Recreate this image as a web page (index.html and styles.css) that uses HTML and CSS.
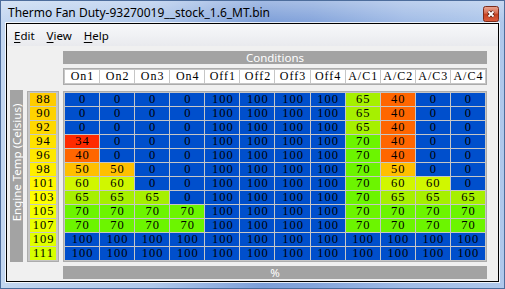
FILE: index.html
```html
<!doctype html>
<html lang="en">

<head>
	<meta charset="UTF-8">
	<title>Thermo Fan Duty</title>
	<link rel="stylesheet" href="styles.css">
</head>

<body>
	<div class="window">
		<div class="titlebar">
			<span class="title">Thermo Fan Duty-93270019__stock_1.6_MT.bin</span>
			<span class="close-btn">
				<svg width="16" height="16" viewBox="0 0 16 16">
					<defs>
						<linearGradient id="closeGrad" x1="0" y1="0" x2="0" y2="1">
							<stop offset="0" stop-color="#eaa793" />
							<stop offset="0.45" stop-color="#d66a4f" />
							<stop offset="0.5" stop-color="#c4401f" />
							<stop offset="1" stop-color="#dc5c3c" />
						</linearGradient>
					</defs>
					<rect x="0.5" y="0.5" width="15" height="15" rx="2" fill="url(#closeGrad)" stroke="#7a2b1b" />
					<path d="M5.5 5.5 L10.5 10.5 M10.5 5.5 L5.5 10.5" stroke="#5a1e12" stroke-width="3.6" />
					<path d="M5.5 5.5 L10.5 10.5 M10.5 5.5 L5.5 10.5" stroke="#ffffff" stroke-width="1.8" />
				</svg>
			</span>
		</div>

		<div class="frame">
			<div class="client">
				<div class="menubar">
					<span class="menu-item"><u>E</u>dit</span>
					<span class="menu-item"><u>V</u>iew</span>
					<span class="menu-item"><u>H</u>elp</span>
				</div>

				<div class="table-area">
					<div class="bar conditions">Conditions</div>

					<div class="col-heads">
						<div>On1</div><div>On2</div><div>On3</div><div>On4</div>
						<div>Off1</div><div>Off2</div><div>Off3</div><div>Off4</div>
						<div>A/C1</div><div>A/C2</div><div>A/C3</div><div>A/C4</div>
					</div>

					<div class="axis-label"><span>Engine Temp (Celsius)</span></div>

					<div class="row-heads">
						<div class="t88">88</div>
						<div class="t90">90</div>
						<div class="t92">92</div>
						<div class="t94">94</div>
						<div class="t96">96</div>
						<div class="t98">98</div>
						<div class="t101">101</div>
						<div class="t103">103</div>
						<div class="t105">105</div>
						<div class="t107">107</div>
						<div class="t109">109</div>
						<div class="t111">111</div>
					</div>

					<div class="cells">
						<!-- 88 -->
						<div class="d0">0</div><div class="d0">0</div><div class="d0">0</div><div class="d0">0</div>
						<div class="d100">100</div><div class="d100">100</div><div class="d100">100</div><div class="d100">100</div>
						<div class="d65">65</div><div class="d40">40</div><div class="d0">0</div><div class="d0">0</div>
						<!-- 90 -->
						<div class="d0">0</div><div class="d0">0</div><div class="d0">0</div><div class="d0">0</div>
						<div class="d100">100</div><div class="d100">100</div><div class="d100">100</div><div class="d100">100</div>
						<div class="d65">65</div><div class="d40">40</div><div class="d0">0</div><div class="d0">0</div>
						<!-- 92 -->
						<div class="d0">0</div><div class="d0">0</div><div class="d0">0</div><div class="d0">0</div>
						<div class="d100">100</div><div class="d100">100</div><div class="d100">100</div><div class="d100">100</div>
						<div class="d65">65</div><div class="d40">40</div><div class="d0">0</div><div class="d0">0</div>
						<!-- 94 -->
						<div class="d34">34</div><div class="d0">0</div><div class="d0">0</div><div class="d0">0</div>
						<div class="d100">100</div><div class="d100">100</div><div class="d100">100</div><div class="d100">100</div>
						<div class="d70">70</div><div class="d40">40</div><div class="d0">0</div><div class="d0">0</div>
						<!-- 96 -->
						<div class="d40">40</div><div class="d0">0</div><div class="d0">0</div><div class="d0">0</div>
						<div class="d100">100</div><div class="d100">100</div><div class="d100">100</div><div class="d100">100</div>
						<div class="d70">70</div><div class="d40">40</div><div class="d0">0</div><div class="d0">0</div>
						<!-- 98 -->
						<div class="d50">50</div><div class="d50">50</div><div class="d0">0</div><div class="d0">0</div>
						<div class="d100">100</div><div class="d100">100</div><div class="d100">100</div><div class="d100">100</div>
						<div class="d70">70</div><div class="d50">50</div><div class="d0">0</div><div class="d0">0</div>
						<!-- 101 -->
						<div class="d60">60</div><div class="d60">60</div><div class="d0">0</div><div class="d0">0</div>
						<div class="d100">100</div><div class="d100">100</div><div class="d100">100</div><div class="d100">100</div>
						<div class="d70">70</div><div class="d60">60</div><div class="d60">60</div><div class="d0">0</div>
						<!-- 103 -->
						<div class="d65">65</div><div class="d65">65</div><div class="d65">65</div><div class="d0">0</div>
						<div class="d100">100</div><div class="d100">100</div><div class="d100">100</div><div class="d100">100</div>
						<div class="d70">70</div><div class="d65">65</div><div class="d65">65</div><div class="d65">65</div>
						<!-- 105 -->
						<div class="d70">70</div><div class="d70">70</div><div class="d70">70</div><div class="d70">70</div>
						<div class="d100">100</div><div class="d100">100</div><div class="d100">100</div><div class="d100">100</div>
						<div class="d70">70</div><div class="d70">70</div><div class="d70">70</div><div class="d70">70</div>
						<!-- 107 -->
						<div class="d70">70</div><div class="d70">70</div><div class="d70">70</div><div class="d70">70</div>
						<div class="d100">100</div><div class="d100">100</div><div class="d100">100</div><div class="d100">100</div>
						<div class="d70">70</div><div class="d70">70</div><div class="d70">70</div><div class="d70">70</div>
						<!-- 109 -->
						<div class="d100">100</div><div class="d100">100</div><div class="d100">100</div><div class="d100">100</div>
						<div class="d100">100</div><div class="d100">100</div><div class="d100">100</div><div class="d100">100</div>
						<div class="d100">100</div><div class="d100">100</div><div class="d100">100</div><div class="d100">100</div>
						<!-- 111 -->
						<div class="d100">100</div><div class="d100">100</div><div class="d100">100</div><div class="d100">100</div>
						<div class="d100">100</div><div class="d100">100</div><div class="d100">100</div><div class="d100">100</div>
						<div class="d100">100</div><div class="d100">100</div><div class="d100">100</div><div class="d100">100</div>
					</div>

					<div class="bar units">%</div>
				</div>
			</div>
		</div>
	</div>
</body>

</html>
```

FILE: styles.css
```css
:root {
	--ui-font: "Segoe UI", "Noto Sans", "Liberation Sans", sans-serif;
	--cell-font: "Liberation Serif", "DejaVu Serif", serif;
	--bar-gray: #a3a3a3;
	--grid-line: #c6c6c6;
	--grid-edge: #acacac;
	--client-bg: #f0f0f0;
	--off-blue: #004fcc;
}

* {
	box-sizing: border-box;
	margin: 0;
	padding: 0;
}

body {
	width: 505px;
	height: 289px;
	overflow: hidden;
	background: #ffffff;
}

/* window chrome */
.window {
	width: 505px;
	height: 289px;
	display: flex;
	flex-direction: column;
	border: 1px solid #4d6d9c;
	background:
		linear-gradient(to bottom, rgba(255, 255, 255, 0.3), rgba(255, 255, 255, 0) 22px),
		linear-gradient(to right, #c2d6f0 0%, #b0c8eb 30%, #7c9ed8 52%, #84a4db 62%, #a0bbe6 80%, #afc8eb 100%);
}

.titlebar {
	height: 21px;
	display: flex;
	align-items: center;
	padding-left: 7px;
	flex-shrink: 0;
}

.title {
	flex: 1;
	font-family: var(--ui-font);
	font-size: 12px;
	color: #000000;
	white-space: nowrap;
	padding-top: 1px;
}

.close-btn {
	align-self: flex-end;
	width: 16px;
	height: 16px;
	margin: 0 5px 0 0;
	display: block;
}

.close-btn svg {
	display: block;
}

.frame {
	flex: 1;
	display: flex;
	margin: 0 4px 5px 4px;
	border: 1px solid rgba(255, 255, 255, 0.8);
}

.client {
	flex: 1;
	border: 1px solid #000000;
	background: var(--client-bg);
	display: flex;
	flex-direction: column;
}

/* menu */
.menubar {
	height: 22px;
	display: flex;
	padding: 3px 0 0 1px;
	background: linear-gradient(to bottom, #f7f8fa, #e9eaee);
	font-family: var(--ui-font);
	font-size: 11.5px;
	line-height: 17px;
	color: #000000;
}

.menu-item {
	padding: 0 6px;
}

.menu-item u {
	text-decoration-thickness: 1px;
	text-underline-offset: 2px;
}

/* table layout */
.table-area {
	display: grid;
	grid-template-columns: 13px 32px 424px;
	grid-template-rows: 13px 17px 173px 13px;
	column-gap: 4px;
	row-gap: 4px;
	padding: 5px 0 0 3px;
}

.bar {
	grid-column: 3;
	background: var(--bar-gray);
	color: #ffffff;
	font-family: var(--ui-font);
	font-size: 11.5px;
	line-height: 13px;
	text-align: center;
	overflow: hidden;
}

.conditions {
	grid-row: 1;
}

.units {
	grid-row: 4;
}

.col-heads {
	grid-column: 3;
	grid-row: 2;
	display: grid;
	grid-template-columns: repeat(12, 1fr);
	grid-auto-rows: 13px;
	gap: 1px;
	padding: 1px;
	border: 1px solid var(--grid-edge);
	background: var(--grid-line);
}

.col-heads div {
	background: #ffffff;
	font-family: var(--cell-font);
	font-size: 12px;
	line-height: 13px;
	letter-spacing: 1px;
	padding-left: 1px;
	text-align: center;
	color: #000000;
}

/* vertical axis caption, turned to read bottom-to-top */
.axis-label {
	grid-column: 1;
	grid-row: 3;
	align-self: end;
	height: 172px;
	background: var(--bar-gray);
	display: flex;
	align-items: center;
	justify-content: center;
	padding-bottom: 27px;
	overflow: hidden;
}

.axis-label span {
	flex-shrink: 0;
	transform: rotate(-90deg);
	font-family: var(--ui-font);
	font-size: 11.5px;
	line-height: 13px;
	color: #ffffff;
	white-space: nowrap;
}

.row-heads {
	grid-column: 2;
	grid-row: 3;
	align-self: end;
	height: 171px;
	display: grid;
	grid-template-columns: 1fr;
	grid-auto-rows: 13px;
	gap: 1px;
	padding: 1px 2px;
	border: 1px solid var(--grid-edge);
	background: var(--grid-line);
}

.row-heads div,
.cells div {
	font-family: var(--cell-font);
	font-size: 12.5px;
	line-height: 13px;
	letter-spacing: 1px;
	padding-left: 1px;
	text-align: center;
	color: #000000;
}

.cells {
	grid-column: 3;
	grid-row: 3;
	align-self: end;
	height: 171px;
	display: grid;
	grid-template-columns: repeat(12, 1fr);
	grid-auto-rows: 13px;
	gap: 1px;
	padding: 1px;
	border: 1px solid var(--grid-edge);
	background: var(--grid-line);
}

/* row header shades */
.t88 { background: #ffcc00; }
.t90 { background: #ffd200; }
.t92 { background: #ffd800; }
.t94 { background: #ffe200; }
.t96 { background: #ffe800; }
.t98 { background: #ffee00; }
.t101 { background: #fff700; }
.t103 { background: #ffff00; }
.t105 { background: #f4ff00; }
.t107 { background: #eaff00; }
.t109 { background: #e0ff00; }
.t111 { background: #d6ff00; }

/* duty shades */
.d0,
.d100 { background: var(--off-blue); }
.d34 { background: #ff2a00; }
.d40 { background: #ff6600; }
.d50 { background: #ffbf00; }
.d60 { background: #d0f700; }
.d65 { background: #a6f000; }
.d70 { background: #6cf500; }
```
